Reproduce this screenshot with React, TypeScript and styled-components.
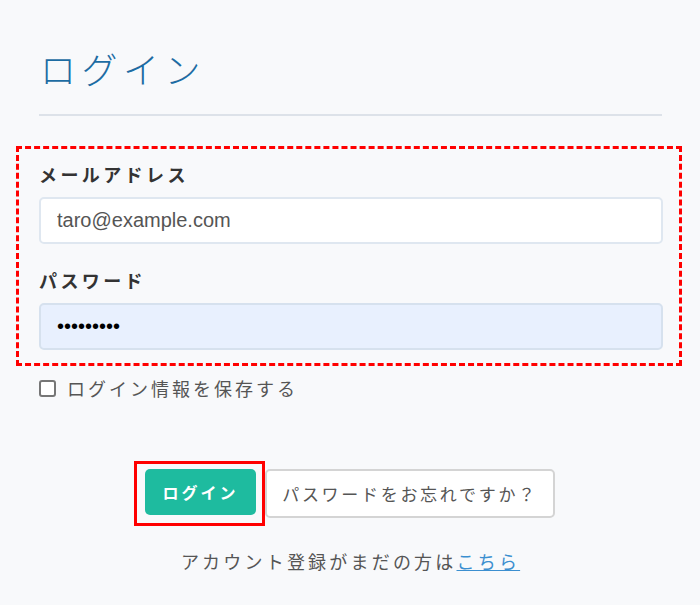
import styled, { createGlobalStyle } from 'styled-components';

const GlobalStyle = createGlobalStyle`
  html, body {
    margin: 0;
    padding: 0;
    background: #f8f9fb;
  }
  body {
    font-family: "Noto Sans CJK JP", "Noto Sans", sans-serif;
    color: #333;
  }
`;

const Page = styled.div`
  display: flow-root;
  width: 700px;
  height: 605px;
  box-sizing: border-box;
  padding: 0 18px 0 16px;
  overflow: hidden;
`;

const Header = styled.div`
  margin: 0 20px 0 23px;
`;

const Title = styled.h1`
  margin: 46px 0 0 1px;
  font-size: 36px;
  line-height: 44px;
  font-weight: 300;
  letter-spacing: 5.5px;
  color: #1d6ca3;
`;

const Divider = styled.hr`
  margin: 24px 0 0;
  border: none;
  height: 2px;
  background: #dde2e9;
`;

const FieldBox = styled.div`
  margin-top: 30px;
  border: 3px dashed #ff0000;
  padding: 12px 16px 13px 20px;
`;

const Field = styled.div`
  & + & {
    margin-top: 23px;
  }
`;

const Label = styled.label`
  display: block;
  font-size: 18px;
  line-height: 26px;
  font-weight: 700;
  letter-spacing: 3.4px;
  color: #333;
`;

const Input = styled.input<{ $filled?: boolean }>`
  display: block;
  box-sizing: border-box;
  width: 100%;
  height: 47px;
  margin-top: 10px;
  padding: 0 16px;
  border: 2px solid ${(p) => (p.$filled ? '#d6e1ee' : '#dfe7f0')};
  border-radius: 5px;
  background: ${(p) => (p.$filled ? '#e8f0fe' : '#ffffff')};
  font-family: "Liberation Sans", Arial, sans-serif;
  font-size: 20px;
  color: ${(p) => (p.$filled ? '#000' : '#555')};
  outline: none;
`;

const CheckRow = styled.label`
  display: flex;
  align-items: center;
  gap: 11px;
  margin: 10px 23px 0;
  font-size: 18px;
  line-height: 24px;
  letter-spacing: 3px;
  color: #555;
`;

const CheckBox = styled.span`
  width: 13px;
  height: 13px;
  border: 2px solid #767676;
  border-radius: 3px;
  background: #fff;
  flex: none;
`;

const Actions = styled.div`
  display: flex;
  align-items: center;
  justify-content: center;
  margin: 61px 20px 0 23px;
  padding-right: 12px;
`;

const Highlight = styled.div`
  border: 3px solid #ff0000;
  padding: 5px 6px 8px 8px;
`;

const PrimaryButton = styled.button`
  width: 111px;
  height: 46px;
  border: none;
  border-radius: 5px;
  background: #1ebb9f;
  color: #fff;
  font-family: inherit;
  font-size: 16px;
  font-weight: 700;
  letter-spacing: 3px;
  cursor: pointer;
`;

const SecondaryButton = styled.button`
  width: 290px;
  height: 49px;
  border: 2px solid #d4d4d4;
  border-radius: 5px;
  background: #fff;
  color: #555;
  font-family: inherit;
  font-size: 17px;
  letter-spacing: 2.7px;
  cursor: pointer;
`;

const Footer = styled.p`
  margin: 22px 20px 0 23px;
  text-align: center;
  font-size: 18px;
  line-height: 26px;
  letter-spacing: 3.2px;
  color: #555;
`;

const FooterLink = styled.a`
  color: #3b8fd0;
  text-decoration: underline;
`;

export default function App() {
  return (
    <>
      <GlobalStyle />
      <Page>
        <Header>
          <Title>ログイン</Title>
          <Divider />
        </Header>
        <FieldBox>
          <Field>
            <Label>メールアドレス</Label>
            <Input type="email" defaultValue="taro@example.com" readOnly />
          </Field>
          <Field>
            <Label>パスワード</Label>
            <Input $filled type="password" defaultValue="123456789" readOnly />
          </Field>
        </FieldBox>
        <CheckRow>
          <CheckBox />
          ログイン情報を保存する
        </CheckRow>
        <Actions>
          <Highlight>
            <PrimaryButton>ログイン</PrimaryButton>
          </Highlight>
          <SecondaryButton>パスワードをお忘れですか？</SecondaryButton>
        </Actions>
        <Footer>
          アカウント登録がまだの方は<FooterLink href="#">こちら</FooterLink>
        </Footer>
      </Page>
    </>
  );
}
